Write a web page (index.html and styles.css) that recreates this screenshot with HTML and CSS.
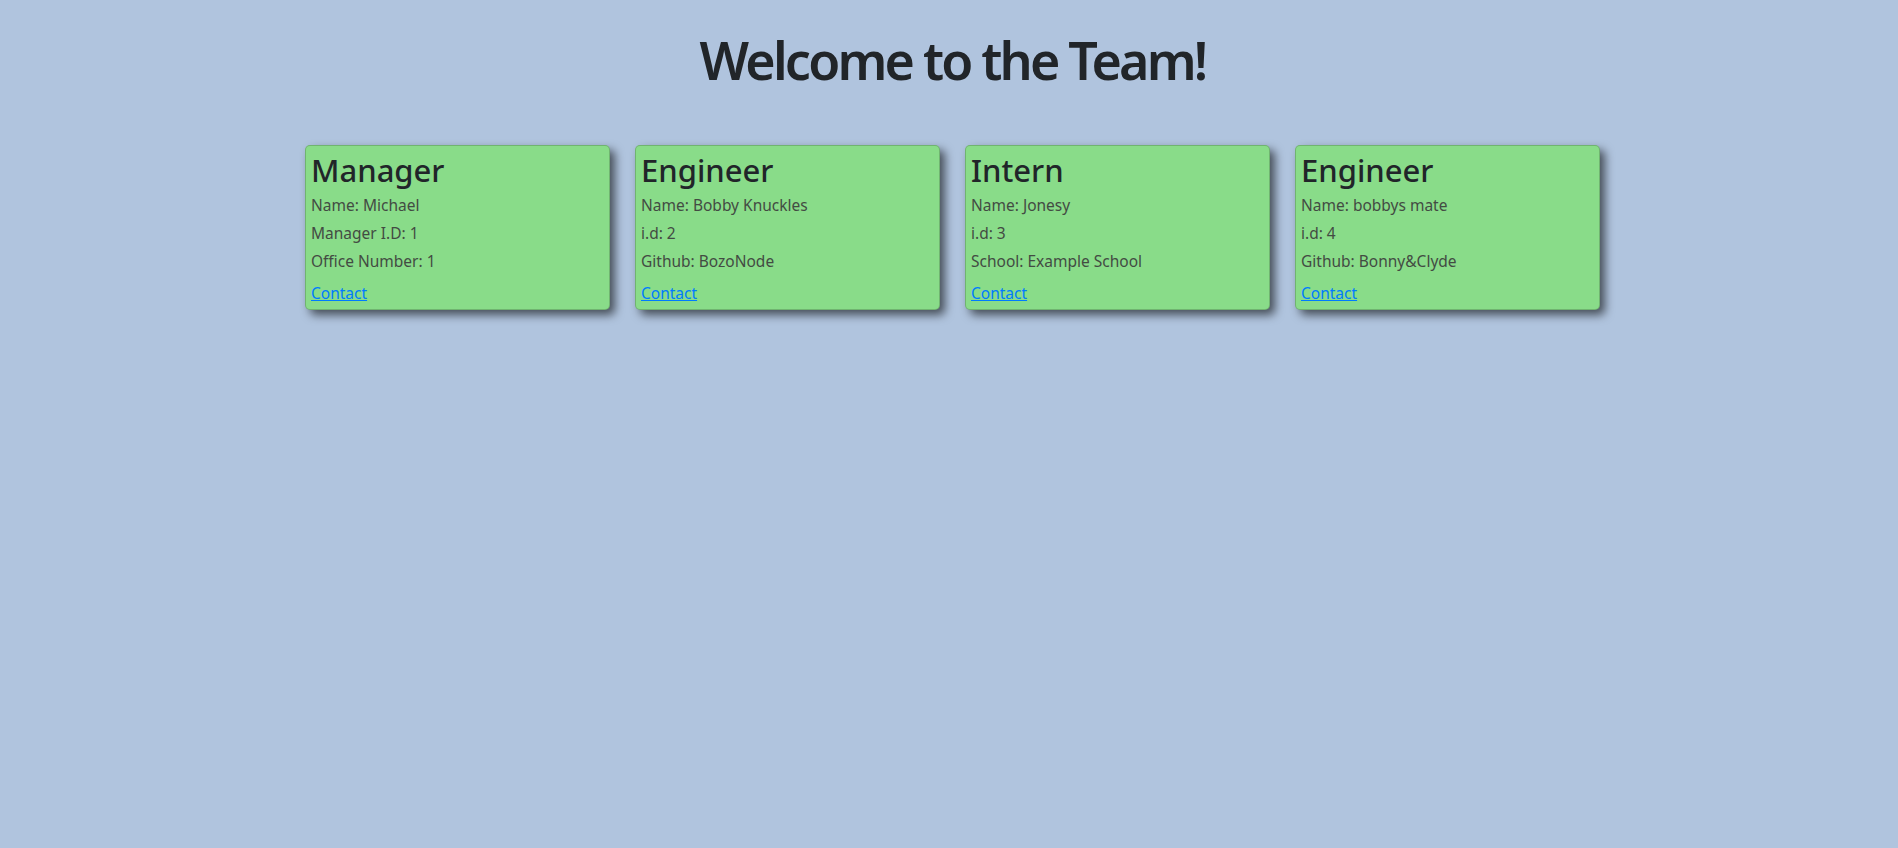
FILE: index.html
```html
<!DOCTYPE html>
<html lang="en">
<head>
<meta charset="UTF-8">
<title>Team Profile</title>
<link rel="stylesheet" href="styles.css">
</head>
<body>
  <header class="page-header">
    <h1 class="page-title">Welcome to the Team!</h1>
  </header>
  <main class="team">
    <section class="card">
      <h2 class="card-title">Manager</h2>
      <p class="card-text">Name: Michael</p>
      <p class="card-text">Manager I.D: 1</p>
      <p class="card-text">Office Number: 1</p>
      <a class="card-link" href="#">Contact</a>
    </section>
    <section class="card">
      <h2 class="card-title">Engineer</h2>
      <p class="card-text">Name: Bobby Knuckles</p>
      <p class="card-text">i.d: 2</p>
      <p class="card-text">Github: BozoNode</p>
      <a class="card-link" href="#">Contact</a>
    </section>
    <section class="card">
      <h2 class="card-title">Intern</h2>
      <p class="card-text">Name: Jonesy</p>
      <p class="card-text">i.d: 3</p>
      <p class="card-text">School: Example School</p>
      <a class="card-link" href="#">Contact</a>
    </section>
    <section class="card">
      <h2 class="card-title">Engineer</h2>
      <p class="card-text">Name: bobbys mate</p>
      <p class="card-text">i.d: 4</p>
      <p class="card-text">Github: Bonny&amp;Clyde</p>
      <a class="card-link" href="#">Contact</a>
    </section>
  </main>
</body>
</html>
```

FILE: styles.css
```css
html, body {
  margin: 0;
  padding: 0;
}

body {
  background: #b0c4de;
  font-family: "Noto Sans", "Open Sans", sans-serif;
  color: #212529;
  min-height: 848px;
  padding-left: 7px;
  box-sizing: border-box;
}

.page-header {
  display: flex;
  justify-content: center;
  padding-top: 27px;
}

.page-title {
  margin: 0;
  font-size: 52px;
  font-weight: 600;
  line-height: 66px;
  letter-spacing: -2.8px;
  color: #212529;
}

.team {
  display: flex;
  justify-content: center;
  gap: 25px;
  margin-top: 52px;
}

.card {
  width: 305px;
  height: 165px;
  box-sizing: border-box;
  background: #89dc89;
  border: 1px solid rgba(0, 0, 0, 0.18);
  border-radius: 5px;
  padding: 6px 5px 3px;
  box-shadow: 5px 5px 10px rgba(0, 0, 0, 0.6);
  display: flex;
  flex-direction: column;
  align-items: flex-start;
}

.card-title {
  margin: 0 0 4px;
  font-size: 31px;
  font-weight: 500;
  line-height: 1.2;
  color: #212529;
}

.card-text {
  margin: 0 0 4px;
  font-size: 15.5px;
  line-height: 24px;
  color: #434b43;
}

.card-link {
  margin-top: 4px;
  font-size: 15.5px;
  line-height: 24px;
  color: #007bff;
  text-decoration: underline;
}
```
